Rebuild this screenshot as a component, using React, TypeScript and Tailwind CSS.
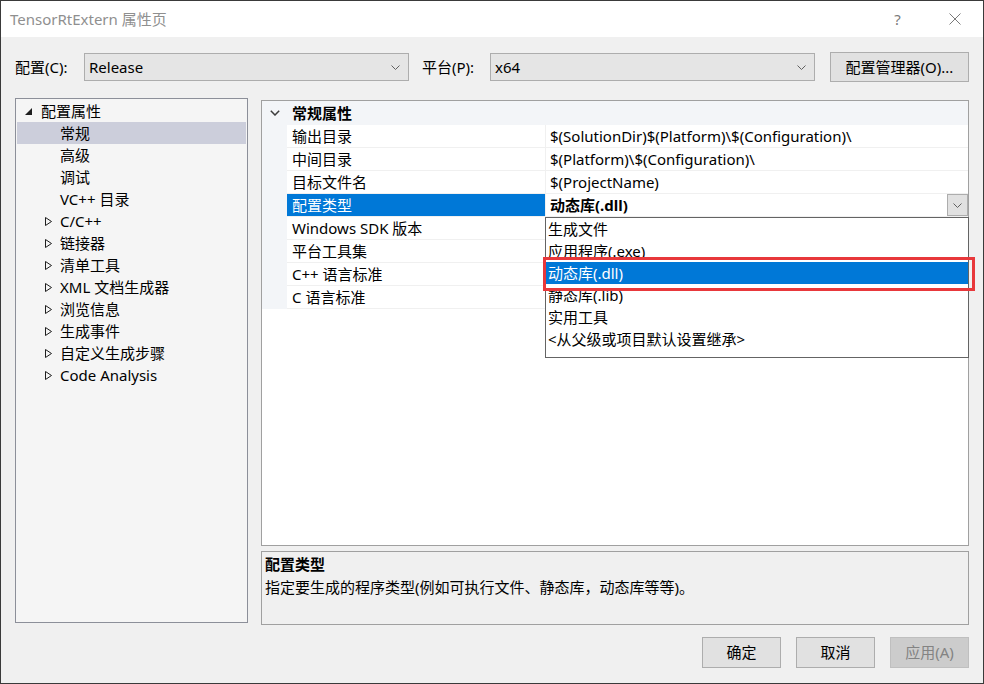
import React from "react";

const Chev = ({ color = "#606060" }: { color?: string }) => (
  <svg width="9" height="5" viewBox="0 0 9 5">
    <path d="M0.5 0.5 L4.5 4.5 L8.5 0.5" stroke={color} strokeWidth="1" fill="none" />
  </svg>
);

const Expanded = () => (
  <svg width="7" height="7" viewBox="0 0 7 7">
    <polygon points="7,0 7,7 0,7" fill="#1e1e1e" />
  </svg>
);

const Collapsed = () => (
  <svg width="7" height="9" viewBox="0 0 7 9">
    <polygon points="0.5,0.5 6.5,4.5 0.5,8.5" fill="none" stroke="#1e1e1e" strokeWidth="1" />
  </svg>
);

function Select({ value }: { value: string }) {
  return (
    <div className="w-[325px] h-[28px] bg-[#e5e5e5] border border-[#adadad] flex items-center justify-between pl-[4px] pr-[8px]">
      <span className="leading-[20px]">{value}</span>
      <Chev />
    </div>
  );
}

type TreeItem = { label: string; kind: "root" | "leaf" | "collapsed"; selected?: boolean };

const tree: TreeItem[] = [
  { label: "配置属性", kind: "root" },
  { label: "常规", kind: "leaf", selected: true },
  { label: "高级", kind: "leaf" },
  { label: "调试", kind: "leaf" },
  { label: "VC++ 目录", kind: "leaf" },
  { label: "C/C++", kind: "collapsed" },
  { label: "链接器", kind: "collapsed" },
  { label: "清单工具", kind: "collapsed" },
  { label: "XML 文档生成器", kind: "collapsed" },
  { label: "浏览信息", kind: "collapsed" },
  { label: "生成事件", kind: "collapsed" },
  { label: "自定义生成步骤", kind: "collapsed" },
  { label: "Code Analysis", kind: "collapsed" },
];

function TreeRow({ item }: { item: TreeItem }) {
  const bg = item.selected ? "bg-[#cccedb]" : "";
  if (item.kind === "root") {
    return (
      <div className={`mx-px h-[22px] flex items-center pl-[8px] ${bg}`}>
        <div className="w-[16px] flex items-center">
          <Expanded />
        </div>
        <span className="leading-[22px]">{item.label}</span>
      </div>
    );
  }
  if (item.kind === "collapsed") {
    return (
      <div className={`mx-px h-[22px] flex items-center pl-[28px] ${bg}`}>
        <div className="w-[15px] flex items-center">
          <Collapsed />
        </div>
        <span className="leading-[22px]">{item.label}</span>
      </div>
    );
  }
  return (
    <div className={`mx-px h-[22px] flex items-center pl-[43px] ${bg}`}>
      <span className="leading-[22px]">{item.label}</span>
    </div>
  );
}

const rows: { name: string; value: string; selected?: boolean }[] = [
  { name: "输出目录", value: "$(SolutionDir)$(Platform)\\$(Configuration)\\" },
  { name: "中间目录", value: "$(Platform)\\$(Configuration)\\" },
  { name: "目标文件名", value: "$(ProjectName)" },
  { name: "配置类型", value: "动态库(.dll)", selected: true },
  { name: "Windows SDK 版本", value: "" },
  { name: "平台工具集", value: "" },
  { name: "C++ 语言标准", value: "" },
  { name: "C 语言标准", value: "" },
];

const options = ["生成文件", "应用程序(.exe)", "动态库(.dll)", "静态库(.lib)", "实用工具", "<从父级或项目默认设置继承>"];

export default function App() {
  return (
    <div className="relative w-[984px] h-[684px] border border-[#3a3a3a] bg-[#f0f0f0] flex flex-col text-[15px] text-[#000] font-['Noto_Sans','Noto_Sans_CJK_SC',sans-serif]">
      {/* title bar */}
      <div className="h-[36px] bg-white flex items-center justify-between">
        <span className="pl-[9px] text-[#8f8f8f] leading-[20px]">TensorRtExtern 属性页</span>
        <div className="flex h-full">
          <div className="w-[57px] flex items-center justify-center text-[#7a7a7a] text-[15px]">?</div>
          <div className="w-[57px] flex items-center justify-center">
            <svg width="12" height="12" viewBox="0 0 12 12">
              <path d="M0.5 0.5 L11.5 11.5 M11.5 0.5 L0.5 11.5" stroke="#7a7a7a" strokeWidth="1" />
            </svg>
          </div>
        </div>
      </div>

      <div className="px-[14px] flex flex-col">
        {/* toolbar */}
        <div className="mt-[15px] h-[30px] flex items-center">
          <span className="w-[69px] leading-[20px]">配置(C):</span>
          <Select value="Release" />
          <span className="ml-[13px] w-[68px] leading-[20px]">平台(P):</span>
          <Select value="x64" />
          <div className="ml-[15px] w-[139px] h-[30px] bg-[#e1e1e1] border border-[#adadad] flex items-center justify-center">
            配置管理器(O)...
          </div>
        </div>

        {/* main */}
        <div className="mt-[16px] flex gap-[13px] items-start">
          <div className="w-[233px] h-[525px] bg-[#f5f5f5] border border-[#8c8f99] pt-px flex flex-col">
            {tree.map((t) => (
              <TreeRow key={t.label} item={t} />
            ))}
          </div>

          <div className="w-[708px] flex flex-col">
            <div className="relative mt-[2px] h-[446px] bg-white border border-[#a0a0a0] flex flex-col">
              <div className="h-[24px] bg-[#f3f5f8] flex items-center">
                <div className="w-[25px] flex items-center justify-center">
                  <svg width="10" height="6" viewBox="0 0 10 6">
                    <path d="M0.8 0.8 L5 5 L9.2 0.8" stroke="#3c3c3c" strokeWidth="1.5" fill="none" />
                  </svg>
                </div>
                <span className="pl-[5px] font-bold leading-[22px]">常规属性</span>
              </div>
              <div className="flex">
                <div className="w-[25px] bg-[#f3f5f8]" />
                <div className="flex-1 flex flex-col">
                  {rows.map((r) => (
                    <div key={r.name} className="h-[23px] flex border-b border-[#f0f0f0]">
                      <div
                        className={`w-[258px] pl-[5px] flex items-center leading-[22px] ${
                          r.selected ? "bg-[#0078d7] text-white" : ""
                        }`}
                      >
                        {r.name}
                      </div>
                      <div className="flex-1 border-l border-[#f0f0f0] pl-[4px] flex items-center justify-between leading-[22px]">
                        <span className={r.selected ? "font-bold" : ""}>{r.value}</span>
                        {r.selected && (
                          <div className="w-[21px] h-[22px] bg-[#e1e1e1] border border-[#adadad] flex items-center justify-center">
                            <Chev />
                          </div>
                        )}
                      </div>
                    </div>
                  ))}
                </div>
              </div>

              {/* dropdown list */}
              <div className="absolute left-[283px] top-[116px] w-[424px] h-[141px] bg-white border border-[#646464] flex flex-col">
                {options.map((o, i) => (
                  <div
                    key={o}
                    className={`h-[22px] pl-[2px] flex items-center leading-[22px] ${
                      i === 2 ? "bg-[#0078d7] text-white" : ""
                    }`}
                  >
                    {o}
                  </div>
                ))}
              </div>
            </div>

            <div className="mt-[5px] h-[74px] border border-[#a0a0a0] bg-[#f0f0f0] pl-[3px] pt-[1px] flex flex-col">
              <span className="font-bold leading-[22px]">配置类型</span>
              <span className="mt-[1px] leading-[22px]">指定要生成的程序类型(例如可执行文件、静态库，动态库等等)。</span>
            </div>
          </div>
        </div>

        {/* buttons */}
        <div className="mt-[12px] flex justify-end gap-[15px]">
          <div className="w-[79px] h-[31px] bg-[#e1e1e1] border border-[#adadad] flex items-center justify-center">确定</div>
          <div className="w-[79px] h-[31px] bg-[#e1e1e1] border border-[#adadad] flex items-center justify-center">取消</div>
          <div className="w-[79px] h-[31px] bg-[#cccccc] border border-[#bfbfbf] text-[#838383] flex items-center justify-center">
            应用(A)
          </div>
        </div>
      </div>

      {/* red highlight */}
      <div className="absolute left-[542px] top-[256px] w-[432px] h-[34px] border-[3px] border-[#e8383b]" />
    </div>
  );
}
